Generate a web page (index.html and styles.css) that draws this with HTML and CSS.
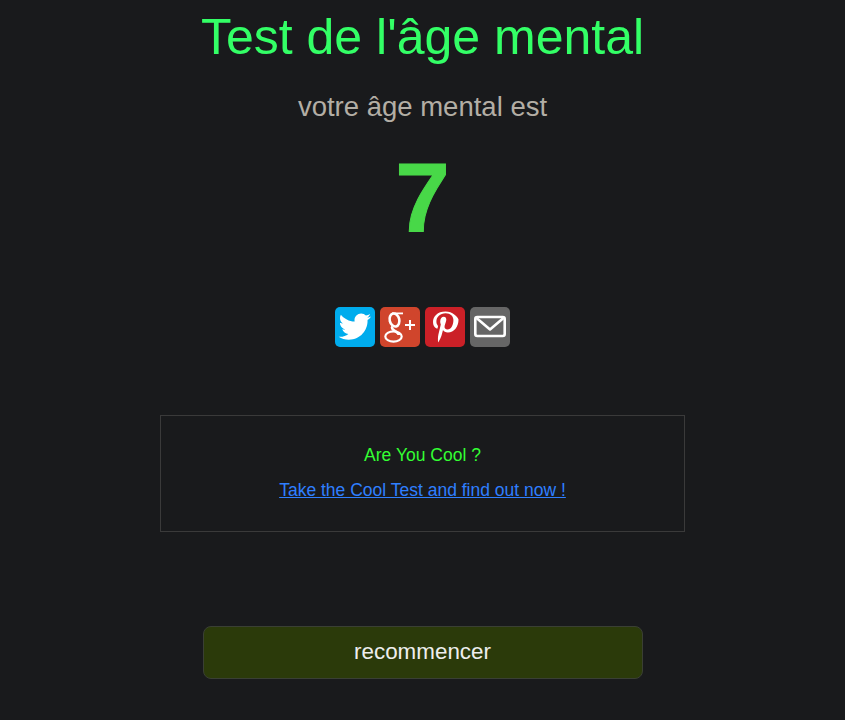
FILE: index.html
```html
<!DOCTYPE html>
<html lang="fr">
<head>
<meta charset="utf-8">
<title>Test de l'âge mental</title>
<link rel="stylesheet" href="styles.css">
</head>
<body>
<main class="page">
  <h1 class="title">Test de l'âge mental</h1>
  <p class="subtitle">votre âge mental est</p>
  <div class="score">7</div>
  <div class="share">
    <a class="share-btn twitter" href="#" aria-label="Twitter">
      <svg viewBox="0 0 40 40" width="40" height="40"><path fill="#fff" d="M36 9.600c-1.200.55-2.450.9-3.800 1.050 1.350-.8 2.400-2.100 2.900-3.650-1.300.75-2.700 1.300-4.200 1.600-1.200-1.300-2.900-2.100-4.800-2.100-3.650 0-6.600 2.950-6.600 6.600 0 .5.05 1 .15 1.500C14 14.300 9.150 11.700 5.900 7.700c-.55 1-.9 2.100-.9 3.300 0 2.300 1.150 4.300 2.950 5.500-1.100-.05-2.100-.35-3-.85v.1c0 3.200 2.300 5.850 5.300 6.450-.55.15-1.150.25-1.750.25-.4 0-.85-.05-1.250-.1.85 2.600 3.300 4.500 6.150 4.550-2.250 1.800-5.100 2.850-8.200 2.850-.55 0-1.050-.05-1.600-.1 2.950 1.900 6.450 3 10.200 3 12.100 0 18.750-10 18.750-18.700v-.85c1.300-.95 2.400-2.100 3.300-3.450z"/></svg>
    </a>
    <a class="share-btn gplus" href="#" aria-label="Google Plus">
      <svg viewBox="0 0 40 40" width="40" height="40"><g fill="none" stroke="#fff"><ellipse cx="14.500" cy="13" rx="4.800" ry="6.600" stroke-width="2.600" transform="rotate(-14 14.500 13)"/><ellipse cx="13.500" cy="29.500" rx="8.200" ry="5.200" stroke-width="2.200"/><path stroke-width="2.600" d="M12.500 19.500c-1.500 2 .5 3 2.500 4.500 2.400 1.700 3.800 2.600 3.800 4"/><path stroke-width="1.800" d="M12 6.400h11"/><path stroke-width="2" d="M25 18h10M30 13v10"/></g></svg>
    </a>
    <a class="share-btn pinterest" href="#" aria-label="Pinterest">
      <svg viewBox="0 0 40 40" width="40" height="40"><path fill="#fff" d="M20.500 4.500C12.500 4.500 8 9.500 8 15c0 3 1.200 5.600 3.700 6.600.4.200.8 0 .9-.5l.4-1.500c.1-.5.100-.7-.3-1.100-.8-1-1.300-2.200-1.300-3.900 0-4.800 3.600-8.400 9.200-8.400 5 0 7.800 3 7.800 6.900 0 5.300-2.400 9.500-5.900 9.500-1.900 0-3.400-1.600-2.900-3.600.6-2.300 1.700-4.800 1.700-6.500 0-1.500-.8-2.800-2.500-2.800-2 0-3.600 2-3.600 4.800 0 1.700.6 2.900.6 2.900l-2.400 10c-.6 2.400-.5 5.600-.3 8.100.7-.7 2.800-4.700 3.500-7.200l1.400-5.300c.7 1.300 2.700 2.500 4.800 2.500 6.400 0 10.700-5.800 10.700-13C32.500 9.500 27.500 4.500 20.500 4.500z"/></svg>
    </a>
    <a class="share-btn email" href="#" aria-label="Email">
      <svg viewBox="0 0 40 40" width="40" height="40"><g fill="none" stroke="#fff" stroke-width="2.600" stroke-linejoin="round"><rect x="5.300" y="10" width="29.400" height="19" rx="2"/><path d="M6.500 11 20 22.500 33.500 11"/></g></svg>
    </a>
  </div>
  <section class="promo">
    <p class="promo-question">Are You Cool ?</p>
    <a class="promo-link" href="#">Take the Cool Test and find out now !</a>
  </section>
  <a class="restart" href="#">recommencer</a>
</main>
</body>
</html>
```
FILE: styles.css
```css
html, body {
  margin: 0;
  padding: 0;
  height: 100%;
  background: #191a1c;
  overflow: hidden;
}

.page {
  display: flex;
  flex-direction: column;
  align-items: center;
  font-family: "Liberation Sans", Arial, sans-serif;
  text-align: center;
}

.title {
  margin: 9px 0 0;
  font-size: 50px;
  line-height: 56px;
  font-weight: 400;
  color: #33ff66;
}

.subtitle {
  margin: 27px 0 0;
  font-size: 27.5px;
  line-height: 30px;
  color: #b3aea5;
}

.score {
  margin-top: 13px;
  font-size: 98px;
  line-height: 126px;
  font-weight: 700;
  color: #48d848;
  -webkit-text-stroke: 1px #48d848;
}

.share {
  display: flex;
  gap: 5px;
  margin-top: 46px;
}

.share-btn {
  display: block;
  width: 40px;
  height: 40px;
  border-radius: 5px;
}

.share-btn svg {
  display: block;
}

.twitter { background: #00aced; }
.gplus { background: #d0452c; }
.pinterest { background: #cb2027; }
.email { background: #666666; }

.promo {
  box-sizing: border-box;
  width: 525px;
  height: 117px;
  margin-top: 68px;
  padding-top: 29px;
  border: 1px solid #3a3a3a;
  font-size: 17.5px;
  line-height: 20px;
}

.promo-question {
  margin: 0 0 15px;
  color: #33ff33;
}

.promo-link {
  color: #2f7fff;
}

.restart {
  box-sizing: border-box;
  display: block;
  width: 440px;
  height: 53px;
  margin-top: 94px;
  border: 1px solid #3a3f34;
  border-radius: 8px;
  background: #2b3a0a;
  color: #eeeeee;
  font-size: 22.4px;
  line-height: 50px;
  text-decoration: none;
}
```
